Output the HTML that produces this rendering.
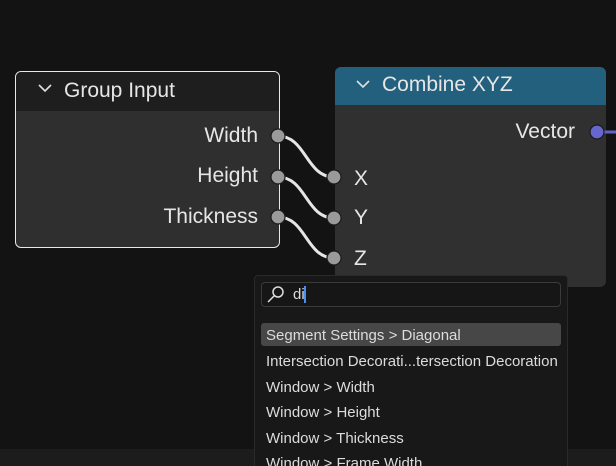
<!DOCTYPE html>
<html style="overflow:hidden"><head><style>
html,body{overflow:hidden}
body{margin:0;width:616px;height:466px;background:#131313;position:relative;overflow:hidden;font-family:"Liberation Sans",sans-serif;color:#e6e6e6}
.a{position:absolute}
.lbl{position:absolute;font-size:21px;white-space:nowrap;line-height:24px}
.r{position:absolute;font-size:21px;white-space:nowrap;line-height:24px;text-align:right}
.row{position:absolute;left:266px;font-size:15px;color:#dcdcdc;white-space:nowrap;line-height:18px}
</style></head><body>
<div class="a" style="left:0;top:449px;width:616px;height:17px;background:#1c1c1c"></div>

<!-- Combine XYZ -->
<div class="a" style="left:335px;top:67px;width:271px;height:220px;background:#303030;border-radius:6px;overflow:hidden">
 <div style="height:38px;background:#22607e"></div>
</div>
<div class="lbl" style="left:382px;top:73px">Combine XYZ</div>
<svg class="a" style="left:355px;top:78px" width="16" height="12"><path d="M2 3 L8 9 L14 3" stroke="#e0e0e0" stroke-width="1.6" fill="none"/></svg>
<div class="r" style="right:41px;top:120px">Vector</div>
<div class="lbl" style="left:354px;top:167px">X</div>
<div class="lbl" style="left:354px;top:206px">Y</div>
<div class="lbl" style="left:354px;top:247px">Z</div>

<!-- Group Input -->
<div class="a" style="left:15px;top:71px;width:263px;height:175px;border:1.5px solid #e8e8e8;border-radius:6px;background:#2f2f2f;overflow:hidden">
 <div style="height:39px;background:#1e1e1e"></div>
</div>
<div class="lbl" style="left:64px;top:79px">Group Input</div>
<svg class="a" style="left:37px;top:82px" width="16" height="12"><path d="M2 3 L8 9 L14 3" stroke="#e0e0e0" stroke-width="1.6" fill="none"/></svg>
<div class="r" style="right:358px;top:124px">Width</div>
<div class="r" style="right:358px;top:164px">Height</div>
<div class="r" style="right:358px;top:205px">Thickness</div>

<svg class="a" style="left:0;top:0" width="616" height="466">
 <g stroke="#e6e6e6" stroke-width="3" fill="none">
  <path d="M278 136 C306 136,306 177,334 177"/>
  <path d="M278 177 C306 177,306 218,334 218"/>
  <path d="M278 217 C306 217,306 258,334 258"/>
 </g>
 <line x1="597" y1="132" x2="616" y2="132" stroke="#6363c7" stroke-width="3"/>
 <g fill="#9a9a9a" stroke="#1a1a1a" stroke-width="1.2">
  <circle cx="278" cy="136" r="7"/><circle cx="278" cy="177" r="7"/><circle cx="278" cy="217" r="7"/>
  <circle cx="334" cy="177" r="7"/><circle cx="334" cy="218" r="7"/><circle cx="334" cy="258" r="7"/>
 </g>
 <circle cx="597" cy="132" r="7" fill="#6666cc" stroke="#1a1a1a" stroke-width="1.2"/>
</svg>

<!-- Popup -->
<div class="a" style="left:254px;top:275px;width:312px;height:191px;background:#181818;border:1px solid #2a2a2a;border-bottom:none;border-radius:4px 4px 0 0"></div>
<div class="a" style="left:261px;top:282px;width:298px;height:23px;background:#161616;border:1px solid #3a3a3a;border-radius:4px"></div>
<svg class="a" style="left:266px;top:285px" width="20" height="18"><circle cx="12" cy="7" r="5" stroke="#ddd" stroke-width="1.5" fill="none"/><line x1="8.5" y1="10.5" x2="2" y2="17" stroke="#ddd" stroke-width="1.5"/></svg>
<div class="row" style="left:293px;top:286px">di</div>
<div class="a" style="left:304px;top:286px;width:2px;height:17px;background:#4a8ef0"></div>
<div class="a" style="left:261px;top:323px;width:300px;height:23px;background:#474747;border-radius:3px"></div>
<div class="row" style="top:327px">Segment Settings &gt; Diagonal</div>
<div class="row" style="top:353px">Intersection Decorati...tersection Decoration</div>
<div class="row" style="top:379px">Window &gt; Width</div>
<div class="row" style="top:404px">Window &gt; Height</div>
<div class="row" style="top:430px">Window &gt; Thickness</div>
<div class="row" style="top:455px">Window &gt; Frame Width</div>
</body></html>
